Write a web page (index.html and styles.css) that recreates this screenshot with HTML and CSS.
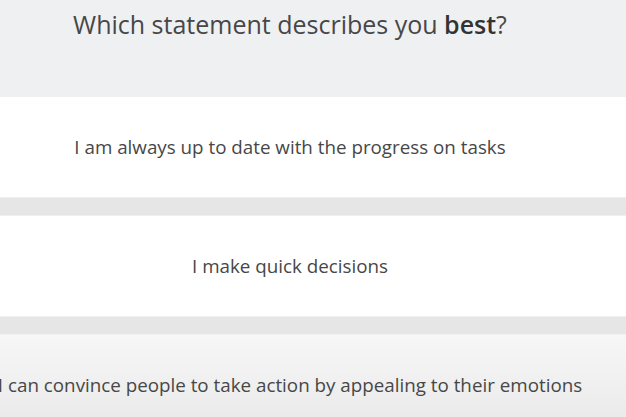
FILE: index.html
```html
<!DOCTYPE html>
<html lang="en">
<head>
    <meta charset="UTF-8">
    <meta name="viewport" content="width=device-width, initial-scale=1.0">
    <title>Which statement describes you best?</title>
    <link rel="stylesheet" href="styles.css">
</head>
<body>
    <div class="question">
        <h1>Which statement describes you <b>best</b>?</h1>
    </div>
    <div class="options">
        <div class="option"><span>I am always up to date with the progress on tasks</span></div>
        <div class="option"><span>I make quick decisions</span></div>
        <div class="option hover"><span>I can convince people to take action by appealing to their emotions</span></div>
    </div>
</body>
</html>
```

FILE: styles.css
```css
body {
    font-family: 'Open Sans', sans-serif;
    color: #474747;
    margin: 0;
    height: 417px;
    overflow: hidden;
    background-color: #e6e6e6;
}
.question {
    background-color: #eff0f2;
    height: 97px;
    display: flex;
    justify-content: center;
    padding-right: 46px;
}
h1 {
    font-size: 25px;
    font-weight: 400;
    margin: 0;
    padding-top: 7px;
    white-space: nowrap;
}
h1 b {
    font-weight: 600;
    color: #333;
}
.options {
    display: flex;
    flex-direction: column;
    gap: 19px;
}
.option {
    background-color: #ffffff;
    height: 100px;
    display: flex;
    align-items: center;
    justify-content: center;
    padding-right: 46px;
    font-size: 18.8px;
    box-shadow: 0 1px 0 #f0f0f0, 0 -1px 0 #f0f0f0;
}
.option span {
    white-space: nowrap;
}
.option.hover {
    background: linear-gradient(#f7f7f7, #e8e8e8);
}
```
